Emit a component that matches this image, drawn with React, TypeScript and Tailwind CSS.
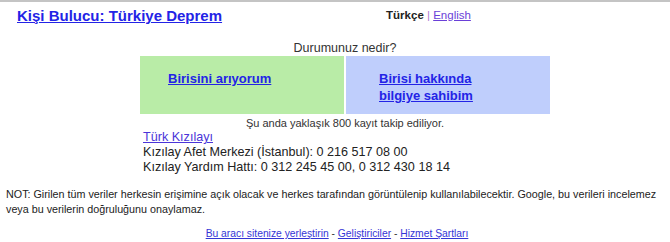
export default function App() {
  return (
    <div className="w-[670px] h-[242px] bg-white border-t-2 border-[#c4c4c4] font-['Liberation_Sans',Arial,sans-serif] text-[#222] overflow-hidden">
      {/* Header */}
      <div className="flex items-start pt-[5px]">
        <a href="#" className="ml-[17px] text-[15px] font-bold text-[#2323e6] underline leading-[18px]">
          Kişi Bulucu: Türkiye Deprem
        </a>
        <div className="ml-[164px] mt-[1px] text-[11.5px] leading-[14px]">
          <span className="font-bold text-[#222]">Türkçe</span>
          <span className="text-[#b07ad0]"> | </span>
          <a href="#" className="text-[#6a3fd8] underline">English</a>
        </div>
      </div>

      {/* Question */}
      <div className="mt-[15px] text-center text-[12.5px] leading-[16px] text-[#333] pl-[20px]">Durumunuz nedir?</div>

      <div className="ml-[140px] w-[410px] flex gap-[2px] text-[13px] font-bold leading-[17px]">
        <div className="w-[204px] h-[58px] bg-[#b9eca7] pl-[28px] pt-[14px]">
          <a href="#" className="text-[#2323e6] underline">Birisini arıyorum</a>
        </div>
        <div className="w-[204px] h-[58px] bg-[#bfcefc] pl-[33px] pt-[14px]">
          <a href="#" className="text-[#2323e6] underline">
            Birisi hakkında
            <br />
            bilgiye sahibim
          </a>
        </div>
      </div>

      <div className="mt-[3px] text-center text-[11px] leading-[13px] text-[#333] pl-[20px]">
        Şu anda yaklaşık 800 kayıt takip ediliyor.
      </div>

      <div className="ml-[143px] text-[12.6px] leading-[15px] text-[#222]">
        <a href="#" className="text-[#4b35d8] underline">Türk Kızılayı</a>
        <div>Kızılay Afet Merkezi (İstanbul): 0 216 517 08 00</div>
        <div>Kızılay Yardım Hattı: 0 312 245 45 00, 0 312 430 18 14</div>
      </div>

      <p className="mt-[12px] ml-[6px] mr-[4px] text-[10.75px] leading-[15px] text-[#222]">
        NOT: Girilen tüm veriler herkesin erişimine açık olacak ve herkes tarafından görüntülenip kullanılabilecektir. Google, bu verileri incelemez veya bu verilerin doğruluğunu onaylamaz.
      </p>

      <div className="mt-[10px] text-center text-[10.3px] leading-[13px] text-[#333] pl-[4px]">
        <a href="#" className="text-[#3535d6] underline">Bu aracı sitenize yerleştirin</a>
        {" - "}
        <a href="#" className="text-[#3535d6] underline">Geliştiriciler</a>
        {" - "}
        <a href="#" className="text-[#3535d6] underline">Hizmet Şartları</a>
      </div>
    </div>
  );
}
